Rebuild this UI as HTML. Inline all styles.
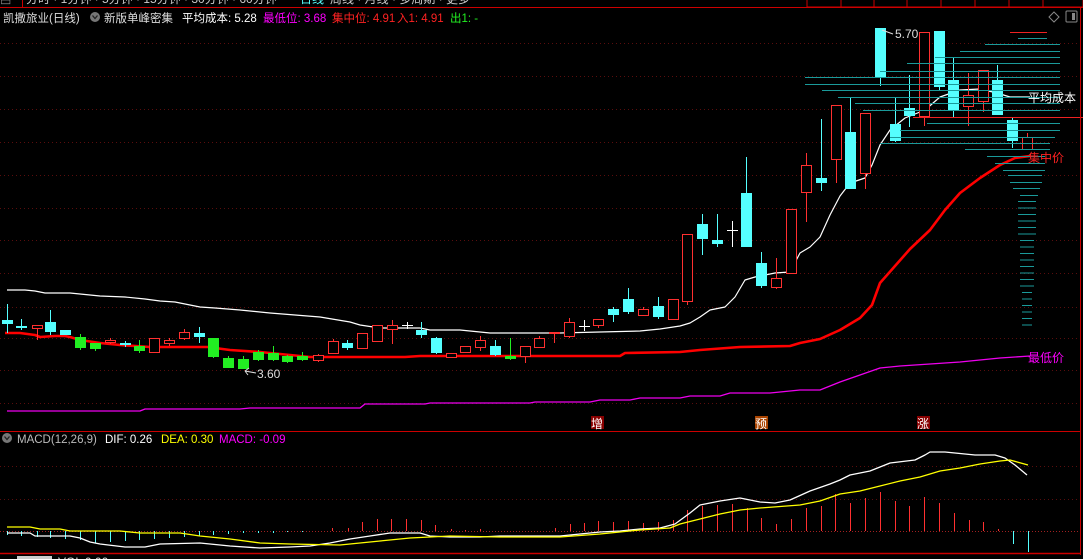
<!DOCTYPE html>
<html><head><meta charset="utf-8"><style>
html,body{margin:0;padding:0;background:#000;width:1083px;height:559px;overflow:hidden}
svg{display:block}
text{font-family:"Liberation Sans","Noto Sans CJK SC",sans-serif;font-size:12px}
.h{font-size:11.5px}
</style></head><body>
<svg id="s" width="1083" height="559" viewBox="0 0 1083 559" xmlns="http://www.w3.org/2000/svg">
<rect width="1083" height="559" fill="#000"/>
<g id="grid"></g>
<g id="lines"></g>
<g id="candles"></g>
<g id="vp"></g>
<g id="macd"></g>
<line x1="0" y1="7.5" x2="1083" y2="7.5" stroke="#c00" stroke-width="1"/>
<text x="26" y="3" fill="#ccc" font-size="11">分时 · 1分钟 · 5分钟 · 15分钟 · 30分钟 · 60分钟</text>
<text x="300" y="3" fill="#5ff" font-size="11">日线</text>
<text x="330" y="3" fill="#ccc" font-size="11">周线 · 月线 · 多周期 · 更多</text>
<g stroke="#c00" fill="none"><rect x="807" y="-5" width="34" height="12"/><rect x="841" y="-5" width="33" height="12"/><rect x="874" y="-5" width="33" height="12"/><rect x="907" y="-5" width="34" height="12"/><rect x="941" y="-5" width="34" height="12"/><rect x="975" y="-5" width="34" height="12"/><rect x="1009" y="-5" width="34" height="12"/><rect x="1043" y="-5" width="40" height="12"/></g>
<text x="0" y="5" fill="#888" font-size="8">▭</text>
<line x1="22.5" y1="0" x2="22.5" y2="7" stroke="#c00"/>
<line x1="1080.5" y1="8" x2="1080.5" y2="555" stroke="#c00"/>
<text class="h" x="3" y="22" fill="#ddd">凯撒旅业(日线)</text>
<circle cx="95" cy="17" r="5" fill="#777"/><path d="M92.5 15.5 L95 18.5 L97.5 15.5" stroke="#222" stroke-width="1.3" fill="none"/>
<text class="h" x="104" y="22" fill="#ddd">新版单峰密集</text>
<text class="h" x="182" y="22" fill="#fff">平均成本: 5.28</text>
<text class="h" x="263" y="22" fill="#f0f">最低位: 3.68</text>
<text class="h" x="332" y="22" fill="#f22">集中位: 4.91</text>
<text class="h" x="397" y="22" fill="#f22">入1: 4.91</text>
<text class="h" x="450" y="22" fill="#2e2">出1: -</text>
<path d="M1054 12 L1059 17 L1054 22 L1049 17Z" stroke="#888" fill="none"/>
<rect x="1066" y="11" width="11" height="11" rx="1" stroke="#888" fill="none"/><rect x="1072" y="13" width="3" height="7" fill="#888"/>
<text x="895" y="38" fill="#ddd">5.70</text>
<path d="M882 30 L893 34" stroke="#ddd"/>
<text x="257" y="378" fill="#ddd">3.60</text>
<path d="M245 371 L256 373 M245 371 L249 368 M245 371 L248 375" stroke="#ddd" fill="none"/>
<text x="1028" y="102" fill="#fff">平均成本</text>
<text x="1028" y="162" fill="#f22">集中价</text>
<text x="1028" y="362" fill="#f0f">最低价</text>
<rect x="591" y="416" width="13" height="13" fill="#800"/><text x="591" y="428" fill="#fff">增</text>
<rect x="755" y="416" width="13" height="13" fill="#a40"/><text x="755" y="428" fill="#fff">预</text>
<rect x="917" y="416" width="13" height="13" fill="#800"/><text x="917" y="428" fill="#fff">涨</text>
<line x1="0" y1="431.5" x2="1080" y2="431.5" stroke="#c00"/>
<line x1="0" y1="553.5" x2="1080" y2="553.5" stroke="#c00" stroke-width="1.5"/>
<circle cx="7" cy="438" r="5" fill="#777"/><path d="M4.5 436.5 L7 439.5 L9.5 436.5" stroke="#222" stroke-width="1.3" fill="none"/>
<text class="h" x="17" y="443" fill="#bbb">MACD(12,26,9)</text>
<text class="h" x="105" y="443" fill="#fff">DIF: 0.26</text>
<text class="h" x="161" y="443" fill="#ff0">DEA: 0.30</text>
<text class="h" x="219" y="443" fill="#f0f">MACD: -0.09</text>
<rect x="17" y="556" width="35" height="4" fill="#ccc"/>
<text x="58" y="566" fill="#ddd">VOL 0.00</text>
</svg>
<script>
var NS="http://www.w3.org/2000/svg";
function el(p,t,a){var e=document.createElementNS(NS,t);for(var k in a)e.setAttribute(k,a[k]);document.getElementById(p).appendChild(e);return e;}
[43,76,109,142,175,208,240,273,307,338,370,403,466,499].forEach(function(y){el('grid','line',{x1:0,x2:1080,y1:y+.5,y2:y+.5,stroke:'#5a0d0d','stroke-dasharray':'1 3'});});
el('grid','line',{x1:0,x2:1080,y1:531.5,y2:531.5,stroke:'#a02020','stroke-dasharray':'1 2'});
var vp=[[32,1010,1047,'r'],[38,1018,1047],[44,985,1060],[51,960,1060],[57,935,1060],[63,907,1060],[71,880,1060],[77,805,1060],[84,805,1060],[90,822,1060],[97,838,1060],[103,855,1060],[110,863,1060],[117,913,1083,'r'],[123,927,1060],[130,900,1060],[137,890,1055],[143,880,1050],[149,965,1050],[156,987,1045],[163,995,1045],[170,1003,1045],[175,1008,1042],[182,1010,1042],[188,1013,1040],[195,1020,1038]];
for(var y=201;y<=330;y+=6.5){var w=y<240?9:(y<290?7:5);vp.push([y,1027-w,1027+w]);}
vp.forEach(function(v){el('vp','line',{x1:v[1],x2:v[2],y1:v[0]+.5,y2:v[0]+.5,stroke:v[3]?'#e22':'#1a9a9a','stroke-width':1});});
function pl(pts,c,w,g){el(g||'lines','polyline',{points:pts.map(function(p){return p.join(',')}).join(' '),fill:'none',stroke:c,'stroke-width':w,'stroke-linejoin':'round'});}
pl([[7,290],[25,290],[35,291],[45,293],[70,293],[80,294],[100,296],[125,297],[145,299],[160,301],[175,302],[185,304],[200,307],[215,308],[240,310],[260,312],[270,313],[320,317],[350,322],[360,325],[380,328],[420,328],[430,330],[460,330],[490,333],[560,333],[600,332],[640,331],[660,329],[680,326],[690,323],[700,317],[710,310],[725,307],[735,297],[745,280],[755,277],[775,273],[790,272],[800,253],[810,247],[820,237],[830,215],[840,196],[850,183],[865,178],[872,165],[880,145],[890,130],[905,118],[925,110],[940,97],[960,90],[980,89],[997,93],[1010,97],[1030,97]],'#fff',1.2);
pl([[5,333],[20,333],[35,335],[40,337],[55,336],[65,336],[70,337],[80,340],[100,343],[120,345],[150,347],[210,347],[215,348],[230,350],[260,352],[290,355],[310,357],[405,357],[420,356],[620,356],[625,353],[680,352],[700,350],[740,347],[790,346],[800,343],[820,339],[840,330],[860,318],[872,305],[880,283],[895,266],[910,249],[930,230],[945,210],[960,193],[980,178],[1000,165],[1015,158],[1030,156]],'#f00',2.6);
pl([[7,411],[140,411],[145,409],[240,409],[250,408],[360,408],[365,404],[425,404],[430,403],[530,403],[535,402],[590,402],[600,400],[630,400],[640,398],[680,398],[690,396],[720,396],[730,393],[770,393],[800,390],[820,390],[840,382],[860,375],[880,368],[900,366],[960,362],[1000,358],[1030,356]],'#e0e',1.3);
var C=[[7,'c',320,324,304,333],[21,'c',326,328,319,330],[37,'r',325,328,325,340],[50,'c',322,332,310,335],[65,'c',330,335,330,335],[80,'g',337,348,334,350],[95,'g',343,349,343,351],[110,'r',340,342,338,344],[125,'c',343,345,341,347],[139,'g',346,351,340,353],[154,'r',338,352,338,352],[169,'r',340,343,338,346],[184,'r',332,338,329,340],[199,'c',333,337,327,343],[213,'g',338,357,338,358],[228,'g',358,368,356,368],[243,'g',359,369,356,369],[258,'g',352,360,350,361],[273,'g',353,360,346,361],[287,'g',356,362,355,363],[302,'g',356,360,352,361],[318,'r',355,360,354,362],[333,'r',341,353,339,354],[347,'c',343,348,340,350],[362,'r',333,348,333,348],[377,'r',325,341,325,341],[392,'r',325,329,320,344],[407,'w',325,325,322,329],[421,'c',330,335,322,338],[436,'c',338,353,337,354],[451,'r',353,357,353,358],[465,'r',346,352,346,352],[480,'r',340,347,336,351],[495,'c',346,355,340,356],[510,'g',356,359,338,360],[525,'r',346,356,346,363],[539,'r',338,347,336,348],[554,'R',332,334,332,343],[569,'r',322,336,318,338],[584,'w',326,326,320,331],[598,'r',319,325,319,328],[613,'c',309,315,307,322],[628,'c',299,312,288,314],[643,'r',309,315,307,316],[658,'c',306,317,297,319],[673,'r',299,319,299,319],[687,'r',234,301,234,305],[702,'c',224,239,214,255],[717,'c',240,244,214,247],[732,'w',230,230,221,247],[746,'c',193,247,157,247],[761,'c',263,286,252,288],[776,'r',278,287,258,289],[791,'r',209,273,209,273],[806,'r',165,192,153,222],[821,'c',178,183,119,191],[836,'r',105,159,105,183],[850,'c',132,189,98,189],[865,'r',113,173,113,189],[880,'c',28,78,28,86],[895,'c',124,141,98,142],[909,'c',108,116,75,127],[924,'r',32,116,32,126],[939,'c',31,87,31,91],[953,'c',80,110,57,117],[968,'r',95,106,73,126],[983,'r',70,101,70,112],[997,'c',80,115,65,115],[1012,'c',120,141,117,148],[1027,'r',137,149,133,149]];
var col={c:'#55ffff',r:'#ff3030',g:'#22ee22',w:'#ffffff',R:'#ff3030'};
C.forEach(function(k){var x=k[0],c=col[k[1]];
 el('candles','line',{x1:x+.5,x2:x+.5,y1:k[4],y2:k[5],stroke:c});
 if(k[1]=='w'){el('candles','line',{x1:x-5,x2:x+6,y1:k[2]+.5,y2:k[2]+.5,stroke:c});return;}
 var h=Math.max(k[3]-k[2],2);
 if(k[1]=='r')el('candles','rect',{x:x-4.5,y:k[2]+.5,width:10,height:h,fill:'#000',stroke:c});
 else el('candles','rect',{x:x-5,y:k[2],width:11,height:h,fill:c});
});
var bars=[[7,535],[21,536],[37,537],[50,538],[65,539],[80,540],[95,543],[110,542],[125,541],[139,540],[154,539],[169,538],[184,537],[199,536],[213,535],[228,534],[243,533],[258,533],[273,533],[287,532],[302,532],[332,528],[348,528],[362,522],[377,519],[391,519],[406,519],[421,520],[435,525],[451,529],[465,530],[480,529],[555,528],[570,524],[584,523],[598,521],[613,522],[628,521],[643,523],[658,522],[673,520],[687,510],[702,506],[717,505],[732,504],[747,508],[761,518],[776,524],[791,519],[806,508],[821,506],[835,494],[850,503],[865,498],[880,492],[895,501],[909,506],[924,497],[939,503],[954,513],[969,520],[983,522],[998,529],[1013,544],[1028,552]];
bars.forEach(function(b){el('macd','line',{x1:b[0]+.5,x2:b[0]+.5,y1:531,y2:b[1],stroke:b[1]>531?'#55ffff':'#ff3030'});});
pl([[7,533],[30,533],[35,536],[70,536],[80,538],[90,542],[100,544],[125,547],[145,547],[160,544],[200,543],[230,546],[260,548],[290,547],[310,546],[330,543],[350,539],[370,536],[390,533],[420,533],[430,536],[450,537],[480,537],[500,536],[540,536],[560,536],[580,534],[600,532],[620,531],[640,529],[660,528],[675,524],[690,513],[700,505],[720,501],[740,498],[760,502],[775,503],[790,500],[810,491],[830,484],[840,480],[850,475],[870,471],[880,467],[890,463],[915,460],[925,455],[930,452],[945,452],[975,455],[995,455],[1005,458],[1015,465],[1027,475]],'#fff',1.3,'macd');
pl([[7,527],[30,527],[40,529],[60,529],[70,531],[120,531],[140,533],[180,533],[200,536],[230,539],[260,543],[290,544],[340,545],[380,541],[410,538],[450,536],[500,537],[560,537],[600,534],[640,530],[670,528],[680,524],[700,519],[720,514],[740,510],[760,508],[800,505],[820,501],[840,494],[860,491],[880,486],[900,481],[920,477],[940,471],[960,468],[980,464],[1000,461],[1010,460],[1028,465]],'#ff0',1.3,'macd');
</script>
</body></html>
